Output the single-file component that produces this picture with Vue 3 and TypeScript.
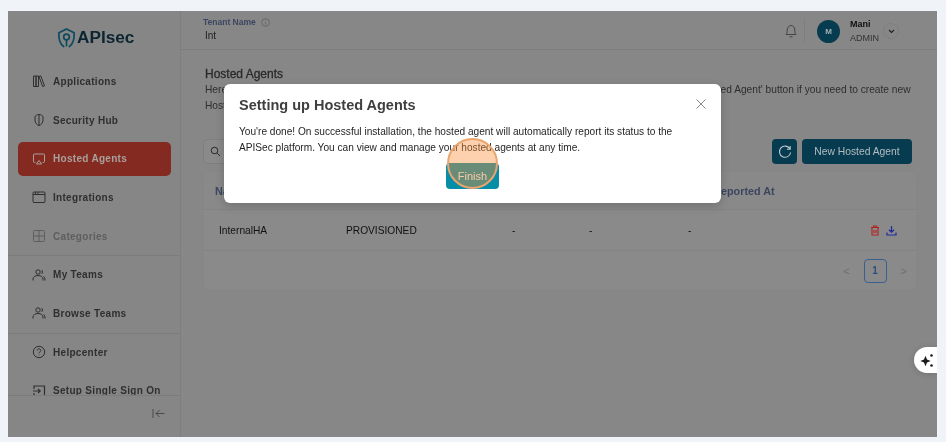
<script setup lang="ts">
const navTop = [
  { label: 'Applications', icon: 'apps' },
  { label: 'Security Hub', icon: 'shield' },
  { label: 'Hosted Agents', icon: 'cast', active: true },
  { label: 'Integrations', icon: 'window' },
  { label: 'Categories', icon: 'grid', muted: true, divider: true },
  { label: 'My Teams', icon: 'team' },
  { label: 'Browse Teams', icon: 'team', divider: true },
  { label: 'Helpcenter', icon: 'help' },
  { label: 'Setup Single Sign On', icon: 'login' },
]
const columns = ['Name', 'Status', 'Version', 'Region', 'Last Reported At', '']
const cells = ['InternalHA', 'PROVISIONED', '-', '-', '-']
</script>

<template>
  <div class="page">
    <div class="frame">
      <aside class="sidebar">
        <div class="logo">
          <svg width="19" height="22" viewBox="0 0 20 22" fill="none" stroke="#0e4a5e" stroke-width="1.8">
            <path d="M7 20C3 17 1.500 12 2 5.500L10 1.500l8 4c.5 6.500-1 11.500-5 14.500" stroke-linecap="round" stroke-linejoin="round" />
            <circle cx="10" cy="10" r="3" />
            <path d="M10 13v6" stroke-linecap="round" />
          </svg>
          <span>APIsec</span>
        </div>
        <nav class="nav">
          <div
            v-for="item in navTop"
            :key="item.label"
            class="nav-row"
            :class="{ divider: item.divider }"
          >
            <div class="nav-item" :class="{ active: item.active, muted: item.muted }">
              <svg class="nav-icon" width="14" height="14" viewBox="0 0 14 14" fill="none" stroke="currentColor" stroke-width="1">
                <template v-if="item.icon === 'apps'">
                  <path d="M1.500 2h2.500v10.500H1.500zM4 2h2.500v10.500H4zM7 2.500l1.800-.6 3.700 10-1.900.6z" />
                </template>
                <template v-else-if="item.icon === 'shield'">
                  <path d="M7 1.500c2 0 4 1.200 4 2.500v3c0 3-2 5-4 5.500-2-.5-4-2.500-4-5.500V4c0-1.300 2-2.500 4-2.500zM7 1.500v11" />
                </template>
                <template v-else-if="item.icon === 'cast'">
                  <path d="M3.500 10.500H2.500a1 1 0 0 1-1-1V3a1 1 0 0 1 1-1h9a1 1 0 0 1 1 1v6.500a1 1 0 0 1-1 1h-1M7 8.500l2.500 3.500h-5z" />
                </template>
                <template v-else-if="item.icon === 'window'">
                  <rect x="1" y="2" width="12" height="10.500" rx="1" />
                  <path d="M1 4.500h12M3.500 2v2.500M6 2v2.500" />
                </template>
                <template v-else-if="item.icon === 'grid'">
                  <rect x="1.500" y="1.500" width="11" height="11" rx="1" />
                  <path d="M7 1.500v11M1.500 7h11" />
                </template>
                <template v-else-if="item.icon === 'team'">
                  <circle cx="6" cy="4" r="2.200" />
                  <path d="M1 12.500v-1.500c0-2 2-3.500 5-3.500s5 1.500 5 3.500v1.500M9.500 2c1.200.5 1.200 3.500 0 4M11.500 8.500c1 .5 1.500 1.500 1.500 4" />
                </template>
                <template v-else-if="item.icon === 'help'">
                  <circle cx="7" cy="7" r="5.700" />
                  <path d="M5.300 5.500c0-2.200 3.500-2.200 3.500 0 0 1.300-1.800 1.300-1.800 2.800M7 9.800v.6" />
                </template>
                <template v-else>
                  <path d="M2 5V2h10.500v10.500H2V9M1 7h7M6 4.800 8.200 7 6 9.200" stroke-width="1.200" />
                </template>
              </svg>
              <span class="nav-label">{{ item.label }}</span>
            </div>
          </div>
        </nav>
        <div class="side-foot">
          <svg width="13" height="11" viewBox="0 0 13 11" fill="none" stroke="#4a4a4a" stroke-width="1">
            <path d="M1 1v9M12.500 5.500H4M7.500 2 4 5.500 7.500 9" />
          </svg>
        </div>
      </aside>

      <div class="main">
        <header class="topbar">
          <div class="tenant">
            <div class="tenant-label">
              Tenant Name
              <svg width="9" height="9" viewBox="0 0 9 9" fill="none" stroke="#5b5b5b" stroke-width=".7">
                <circle cx="4.500" cy="4.500" r="3.800" />
                <path d="M4.500 4v2.500M4.500 2.500v.6" />
              </svg>
            </div>
            <div class="tenant-value">Int</div>
          </div>
          <div class="user">
            <svg class="bell" width="12" height="14" viewBox="0 0 12 14" fill="none" stroke="#3d3d3d" stroke-width=".9">
              <path d="M1 10.500c1-1 1.200-2 1.200-4.500C2.200 3.500 4 1.500 6 1.500s3.800 2 3.800 4.500c0 2.500.2 3.500 1.200 4.500zM4.500 12.800h3" stroke-linejoin="round" />
            </svg>
            <span class="vline"></span>
            <span class="avatar">M</span>
            <div class="who">
              <strong>Mani</strong>
              <span>ADMIN</span>
            </div>
            <span class="chev">
              <svg width="7" height="5" viewBox="0 0 7 5" fill="none" stroke="#1f1f1f" stroke-width="1.100"><path d="M1 1l2.500 2.500L6 1" /></svg>
            </span>
          </div>
        </header>

        <section class="content">
          <h1>Hosted Agents</h1>
          <p class="desc">Here you can view and manage your Hosted Agents. Use the search and filter tools below, and click the 'New Hosted Agent' button if you need to create new Hosted Agents for your organization.</p>
          <div class="toolbar">
            <div class="search">
              <svg width="11" height="11" viewBox="0 0 11 11" fill="none" stroke="#2b2b2b" stroke-width="1"><circle cx="4.500" cy="4.500" r="3.300" /><path d="M7 7l3 3" /></svg>
            </div>
            <button class="btn square">
              <svg width="14" height="14" viewBox="0 0 13 13" fill="none" stroke="#c3c9cc" stroke-width="1"><path d="M11 3.500A5.200 5.200 0 1 0 11.700 7M11.300 1v3H8.300" /></svg>
            </button>
            <button class="btn wide">New Hosted Agent</button>
          </div>
          <div class="card">
            <div class="grid head">
              <span v-for="(c, i) in columns" :key="i">{{ c }}</span>
            </div>
            <div class="grid row">
              <span v-for="(c, i) in cells" :key="i">{{ c }}</span>
              <span class="actions">
                <svg width="10" height="11" viewBox="0 0 10 11" fill="none" stroke="#b3211f" stroke-width="1.100"><path d="M1 2.500h8M3.500 2.500V1h3v1.500M2 2.500v7.500h6V2.500M4 5v3M6 5v3" /></svg>
                <svg width="11" height="11" viewBox="0 0 11 11" fill="none" stroke="#1f2a99" stroke-width="1.200"><path d="M5.500 1v6M3 4.800l2.500 2.400L8 4.800M1 7.500V10h9V7.500" /></svg>
              </span>
            </div>
            <div class="pager">
              <span class="arrow">&lt;</span>
              <span class="pg">1</span>
              <span class="arrow">&gt;</span>
            </div>
          </div>
        </section>
      </div>

      <div class="scrim">
        <div class="modal">
          <div class="modal-head">
            <h2>Setting up Hosted Agents</h2>
            <svg width="10" height="10" viewBox="0 0 10 10" fill="none" stroke="#7a7a7a" stroke-width=".9"><path d="M.5.500l9 9M9.500.500l-9 9" /></svg>
          </div>
          <p>You're done! On successful installation, the hosted agent will automatically report its status to the APISec platform. You can view and manage your hosted agents at any time.</p>
          <div class="modal-foot">
            <button class="finish">Finish</button>
            <span class="spot"></span>
          </div>
        </div>
        <div class="spark">
          <svg width="15" height="15" viewBox="0 0 15 15" fill="#1c1c1c">
            <path d="M5.500 2.800 7 6.500l3.700 1.500L7 9.500l-1.500 3.700L4 9.500.300 8 4 6.500z" />
            <circle cx="11.500" cy="2.500" r="1.300" />
            <circle cx="11.500" cy="12.500" r="1.300" />
          </svg>
        </div>
      </div>
    </div>
  </div>
</template>

<style>
html, body { margin: 0; background: #f0f4f9; }
</style>

<style scoped>
.page {
  width: 946px;
  height: 442px;
  box-sizing: border-box;
  padding: 11px 9px 5px 8px;
  background: #f0f4f9;
  font-family: "Liberation Sans", Arial, sans-serif;
  overflow: hidden;
}
.frame {
  position: relative;
  display: flex;
  height: 426px;
  overflow: hidden;
  background: #878787;
  filter: blur(0.4px);
}
.sidebar {
  position: relative;
  width: 173px;
  flex: none;
  box-sizing: border-box;
  border-right: 1px solid #7f7f7f;
  background: #868686;
  overflow: hidden;
}
.logo {
  height: 49px;
  display: flex;
  align-items: center;
  gap: 1px;
  padding-left: 49px;
  box-sizing: border-box;
  color: #0b2531;
  font: 700 17.2px "Liberation Sans", Arial, sans-serif;
  margin-top: 2px;
}
.nav-row { height: 38.7px; padding: 0 10px; box-sizing: border-box; display: flex; align-items: center; }
.nav-row.divider { box-shadow: 0 1px 0 #7c7c7c; }
.nav-item {
  width: 153px;
  height: 34px;
  flex: none;
  box-sizing: border-box;
  padding-left: 14px;
  display: flex;
  align-items: center;
  gap: 7px;
  border-radius: 5px;
  font: 700 10px "Liberation Sans", Arial, sans-serif;
  letter-spacing: .3px;
  color: #2f2f2f;
}
.nav-label { white-space: nowrap; }
.nav-item.active { background: #842a20; color: #a8a19c; }
.nav-item.muted { color: #5e5e5e; }
.nav-icon { flex: none; }
.side-foot {
  position: absolute;
  left: 0; right: 0; bottom: 0;
  height: 42px;
  box-sizing: border-box;
  border-top: 1px solid #7c7c7c;
  background: #868686;
  display: flex;
  justify-content: flex-end;
  padding: 12px 15px 0 0;
  align-items: flex-start;
}
.main { flex: 1; min-width: 0; }
.topbar {
  height: 39px;
  box-sizing: border-box;
  border-bottom: 1px solid #7d7d7d;
  display: flex;
  justify-content: space-between;
  padding: 6px 38px 0 22px;
}
.tenant-label { display: flex; align-items: center; gap: 5px; font-size: 8.5px; font-weight: 700; color: #3c4660; }
.tenant-value { font-size: 10px; margin: 3px 0 0 2px; color: #222; }
.user { display: flex; align-items: center; height: 28px; }
.bell { margin-right: 7px; }
.vline { width: 1px; height: 24px; background: #7d7d7d; margin-right: 12px; }
.avatar {
  width: 23px; height: 23px; border-radius: 50%;
  background: #073c50; color: #a3b0b6;
  font-size: 8px; font-weight: 700;
  display: flex; align-items: center; justify-content: center;
  margin-right: 10px;
}
.who { display: flex; flex-direction: column; gap: 3px; font-size: 9px; color: #222; line-height: 11px; width: 33px; }
.who strong { color: #111; }
.who span { color: #333; }
.chev {
  width: 16px; height: 16px; border-radius: 50%;
  border: 1px solid #7f7f7f; box-sizing: border-box;
  display: flex; align-items: center; justify-content: center;
}
.content { padding: 17px 20px 0 22px; position: relative; }
h1 { margin: 0 0 0 2px; font-size: 12px; font-weight: 400; -webkit-text-stroke: .3px #2a2a2a; color: #2a2a2a; line-height: 14px; }
.desc { margin: 1px 0 0 2px; font-size: 10.2px; line-height: 16px; color: #2e2e2e; width: 712px; }
.toolbar { display: flex; align-items: center; gap: 5px; margin-top: 25px; margin-right: 5px; }
.search {
  width: 200px; height: 25px; box-sizing: border-box; margin-right: auto;
  border: 1px solid #7e7e7e; border-radius: 4px; background: #8a8a8a;
  padding-left: 6px; display: flex; align-items: center;
}
.btn {
  height: 25px; border: 0; padding: 0; border-radius: 4px;
  background: #073c50; color: #b4bcc0;
  font: 10.3px "Liberation Sans", Arial, sans-serif;
  display: flex; align-items: center; justify-content: center;
}
.square { width: 25px; }
.wide { width: 110px; }
.card {
  margin: 7px 0 0;
  width: 714px;
  height: 120px;
  background: #8a8a8a;
  border: 1px solid #868686;
  box-sizing: border-box;
  border-radius: 6px;
  display: flex;
  flex-direction: column;
}
.grid { display: grid; grid-template-columns: 127px 166px 77px 99px 1fr 100px; padding-left: 15px; align-items: center; }
.head { height: 37px; font-size: 10.8px; font-weight: 700; color: #3c4660; background: #898989; border-radius: 6px 6px 0 0; border-bottom: 1px solid #838383; padding-left: 11px; grid-template-columns: 131px 166px 77px 99px 1fr 100px; }
.row { height: 40px; font-size: 10.2px; color: #111; border-bottom: 1px solid #838383; }
.actions { display: flex; gap: 6px; align-items: center; justify-content: flex-end; padding-right: 19px; }
.pager { flex: 1; display: flex; align-items: center; justify-content: flex-end; padding-right: 9px; gap: 14px; font-size: 10px; }
.arrow { color: #6e6e6e; font-size: 11px; }
.pg {
  width: 23px; height: 24px; box-sizing: border-box;
  border: 1px solid #38608f; border-radius: 4px;
  color: #2c4f7f; font-weight: 700;
  display: flex; align-items: center; justify-content: center;
}
.scrim { position: absolute; inset: 0; }
.modal {
  position: absolute;
  left: 216px;
  top: 73px;
  width: 497px;
  height: 119px;
  box-sizing: border-box;
  padding: 13px 15px 0;
  background: #fff;
  border-radius: 6px;
  box-shadow: 0 3px 10px rgba(0,0,0,.18);
}
.modal-head { display: flex; justify-content: space-between; align-items: center; height: 17px; }
.modal-head svg { margin-top: -3px; }
h2 { margin: 0; font-size: 14.5px; line-height: 17px; font-weight: 700; color: #3f3f3f; }
.modal p {
  margin: 10px 0 0;
  font-size: 10.15px;
  line-height: 16px;
  color: #1f1f1f;
}
.modal-foot {
  position: relative;
  display: flex;
  justify-content: center;
  margin-top: 7px;
}
.finish {
  width: 53px; height: 26px; border: 0; padding: 0;
  border-radius: 4px;
  background: #088da6;
  color: #f3f3f3;
  font: 11px "Liberation Sans", Arial, sans-serif;
}
.spot {
  position: absolute;
  left: 208px;
  top: -25px;
  width: 51px;
  height: 51px;
  box-sizing: border-box;
  border-radius: 50%;
  background: rgba(250, 140, 50, .4);
  border: 2px solid #e8a56d;
  pointer-events: none;
}
.spark {
  position: absolute;
  right: 0;
  top: 336px;
  width: 23px;
  height: 26px;
  background: #fff;
  border-radius: 13px 0 0 13px;
  box-shadow: 0 1px 6px rgba(0,0,0,.15);
  display: flex;
  align-items: center;
  padding-left: 6px;
  box-sizing: border-box;
}
</style>
